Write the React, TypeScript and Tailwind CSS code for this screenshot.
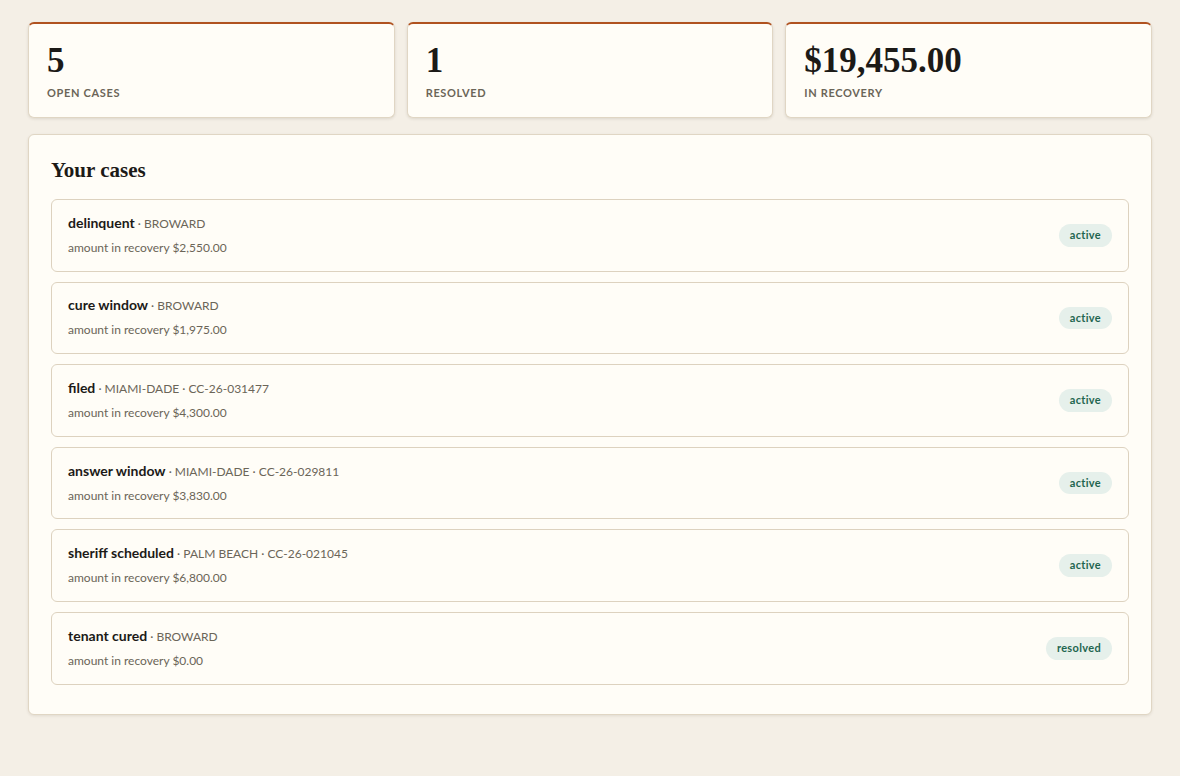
const stats = [
  { value: "5", label: "Open cases" },
  { value: "1", label: "Resolved" },
  { value: "$19,455.00", label: "In recovery" },
];

const cases = [
  { stage: "delinquent", meta: "BROWARD", amount: "$2,550.00", status: "active" },
  { stage: "cure window", meta: "BROWARD", amount: "$1,975.00", status: "active" },
  { stage: "filed", meta: "MIAMI-DADE · CC-26-031477", amount: "$4,300.00", status: "active" },
  { stage: "answer window", meta: "MIAMI-DADE · CC-26-029811", amount: "$3,830.00", status: "active" },
  { stage: "sheriff scheduled", meta: "PALM BEACH · CC-26-021045", amount: "$6,800.00", status: "active" },
  { stage: "tenant cured", meta: "BROWARD", amount: "$0.00", status: "resolved" },
];

const sans = "font-['Lato','Noto_Sans',sans-serif]";
const serif = "font-['Liberation_Serif','DejaVu_Serif',serif]";

export default function App() {
  return (
    <div className={`min-h-screen bg-[#f4efe6] px-7 pt-[22px] pb-10 ${sans}`}>
      {/* stat cards */}
      <div className="grid grid-cols-3 gap-3">
        {stats.map((s) => (
          <div
            key={s.label}
            className="h-[96px] rounded-md border border-[#e0d6c4] border-t-2 border-t-[#b0521f] bg-[#fffdf7] px-[18px] pt-[17px] shadow-[0_1px_3px_rgba(60,40,20,0.12)]"
          >
            <div className={`${serif} text-[35px] font-bold leading-[40px] text-[#1c1a17]`}>{s.value}</div>
            <div className="mt-[4px] text-[11px] font-bold uppercase tracking-[0.06em] text-[#6b6558]">{s.label}</div>
          </div>
        ))}
      </div>

      {/* cases */}
      <div className="mt-4 rounded-md border border-[#e0d6c4] bg-[#fffdf7] px-[22px] pt-[22px] pb-[29px] shadow-[0_1px_3px_rgba(60,40,20,0.10)]">
        <h2 className={`${serif} text-[21px] font-bold leading-[26px] text-[#1c1a17]`}>Your cases</h2>
        <div className="mt-[16px] flex flex-col gap-[10px]">
          {cases.map((c) => (
            <div
              key={c.stage}
              className="flex h-[72.6px] items-center justify-between rounded-md border border-[#ddd2bf] px-4"
            >
              <div>
                <div className="text-[12px] leading-[18px] text-[#6b6558]">
                  <span className="text-[14px] font-bold text-[#1c1a17]">{c.stage}</span>
                  <span> · {c.meta}</span>
                </div>
                <div className="mt-[6px] text-[12px] leading-[18px] text-[#6b6558]">amount in recovery {c.amount}</div>
              </div>
              <span className="rounded-full bg-[#e6f0eb] px-[11px] py-[3px] text-[11px] font-bold tracking-[0.03em] text-[#1f6650]">
                {c.status}
              </span>
            </div>
          ))}
        </div>
      </div>
    </div>
  );
}
